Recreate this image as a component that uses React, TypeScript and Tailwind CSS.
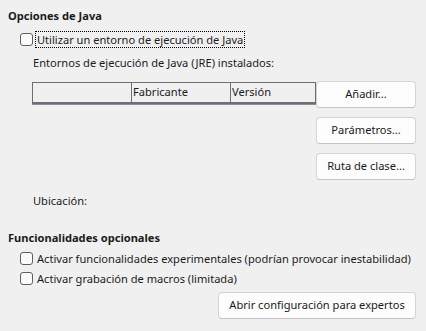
import React from "react";

function Check({ label, focused }: { label: string; focused?: boolean }) {
  return (
    <label className="flex items-center h-[20px] whitespace-nowrap">
      <span className="w-[13px] h-[13px] rounded-[3px] border border-[#5f5f5f] bg-[#fbfbfb] ml-[20px] mr-[2px] shrink-0" />
      <span
        className={
          focused
            ? "border border-dotted border-[#000] px-[1px] leading-[15px]"
            : "px-[2px] leading-[15px]"
        }
      >
        {label}
      </span>
    </label>
  );
}

function Btn({ children, w }: { children: React.ReactNode; w: string }) {
  return (
    <button
      className={`${w} h-[27px] rounded-[4px] border border-[#d3d3d3] border-b-[#c3c3c3] bg-[#fdfdfd] text-[#1a1a1a] text-[11.1px] flex items-center justify-center whitespace-nowrap`}
    >
      {children}
    </button>
  );
}

export default function App() {
  return (
    <div
      className="w-[426px] h-[331px] bg-[#f0f0f0] text-[#1b1b1b] text-[11.1px] relative overflow-hidden"
      style={{ fontFamily: '"Noto Sans", sans-serif' }}
    >
      <div className="pt-[8px] pl-[8px] font-bold leading-[16px]">Opciones de Java</div>
      <div className="mt-[5px]">
        <Check label="Utilizar un entorno de ejecución de Java" focused />
      </div>
      <div className="pl-[33px] mt-[6px] leading-[16px]">Entornos de ejecución de Java (JRE) instalados:</div>

      <div className="flex mt-[11px] pr-[10px]">
        <div className="pl-[32px] w-[316px]">
          <div className="flex h-[22px] border-t border-l border-r border-[#6f6f6f] border-b-[2px] border-b-[#6f6f72] shadow-[0_1px_0_#8a8fa0]">
            <div className="w-[99px] border-r border-[#6f6f6f]" />
            <div className="w-[99px] border-r border-[#6f6f6f] pl-[1px] flex items-center">Fabricante</div>
            <div className="flex-1 pl-[1px] flex items-center">Versión</div>
          </div>
        </div>
        <div className="flex flex-col gap-[9px] ml-auto -mt-[1px]">
          <Btn w="w-[100px]">Añadir...</Btn>
          <Btn w="w-[100px]">Parámetros...</Btn>
          <Btn w="w-[100px]">Ruta de clase...</Btn>
        </div>
      </div>

      <div className="pl-[33px] mt-[13px] leading-[16px]">Ubicación:</div>

      <div className="pl-[8px] mt-[21px] font-bold leading-[16px]">Funcionalidades opcionales</div>
      <div className="mt-[2px]">
        <Check label="Activar funcionalidades experimentales (podrían provocar inestabilidad)" />
        <Check label="Activar grabación de macros (limitada)" />
      </div>
      <div className="flex justify-end pr-[10px] mt-[4px]">
        <Btn w="w-[198px]">Abrir configuración para expertos</Btn>
      </div>
    </div>
  );
}
